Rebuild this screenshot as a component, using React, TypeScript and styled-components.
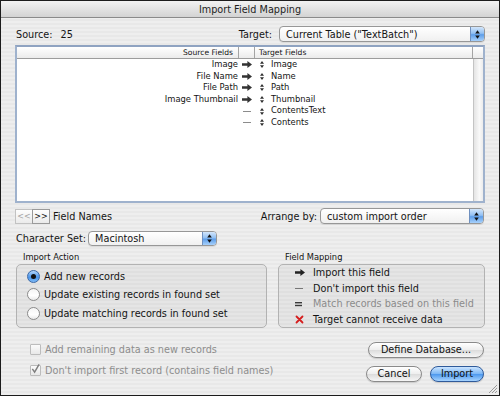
import React from "react";
import styled, { createGlobalStyle } from "styled-components";

const GlobalStyle = createGlobalStyle`
  html, body { margin: 0; padding: 0; background: #ffffff; }
  body { font-family: "DejaVu Sans", "Liberation Sans", sans-serif; }
`;

const Window = styled.div`
  position: relative;
  width: 500px;
  height: 396px;
  box-sizing: border-box;
  border: 1px solid #1c1c1c;
  background: repeating-linear-gradient(to bottom, #eeeeee 0, #eeeeee 2px, #e8e8e8 2px, #e8e8e8 4px);
  font-size: 9.7px;
  color: #141414;
  overflow: hidden;
  display: flex;
  flex-direction: column;
`;

const TitleBar = styled.div`
  height: 16px;
  border-bottom: 1px solid #8a8a8a;
  background: linear-gradient(#f2f2f2, #d3d3d3);
  display: flex;
  align-items: center;
  justify-content: center;
  color: #1e1e1e;
`;

const Body = styled.div`
  padding: 8px 14px 0 14px;
  display: flex;
  flex-direction: column;
`;

const Row = styled.div<{ $mt?: number; $h?: number }>`
  display: flex;
  align-items: center;
  height: ${(p) => p.$h ?? 16}px;
  margin-top: ${(p) => p.$mt ?? 0}px;
`;

const Label = styled.span<{ $ml?: number; $mr?: number }>`
  margin-left: ${(p) => p.$ml ?? 0}px;
  margin-right: ${(p) => p.$mr ?? 0}px;
  white-space: nowrap;
`;

const Spacer = styled.div`
  flex: 1;
`;

/* popup menus */
const PopupBox = styled.div<{ $w: number; $h?: number; $mr?: number }>`
  width: ${(p) => p.$w}px;
  height: ${(p) => p.$h ?? 16}px;
  margin-right: ${(p) => p.$mr ?? 0}px;
  box-sizing: border-box;
  display: flex;
  border: 1px solid #979797;
  border-radius: 4px;
  background: linear-gradient(#ffffff, #f0f0f0);
  overflow: hidden;
  box-shadow: 0 1px 0 rgba(0, 0, 0, 0.08);
`;

const PopupText = styled.span`
  flex: 1;
  padding-left: 6px;
  display: flex;
  align-items: center;
  white-space: nowrap;
`;

const PopupArrows = styled.span`
  width: 13px;
  border-left: 1px solid #6f90bf;
  background: linear-gradient(#d3e6fb, #92c0f2 45%, #5e9ee9 55%, #a8d1fb);
  display: flex;
  align-items: center;
  justify-content: center;
`;

const Popup = ({
  w,
  h,
  mr,
  children,
}: {
  w: number;
  h?: number;
  mr?: number;
  children: React.ReactNode;
}) => (
  <PopupBox $w={w} $h={h} $mr={mr}>
    <PopupText>{children}</PopupText>
    <PopupArrows>
      <svg width="5" height="9" viewBox="0 0 5 9">
        <path d="M2.5 0.3 L4.8 3.4 H0.2 Z M2.5 8.7 L4.8 5.6 H0.2 Z" fill="#111" />
      </svg>
    </PopupArrows>
  </PopupBox>
);

/* field list */
const ListBox = styled.div`
  margin-top: 3px;
  height: 158px;
  box-sizing: border-box;
  border: 2px solid #9fb2cd;
  border-top-color: #8fa3c1;
  background: #ffffff;
  display: flex;
  flex-direction: column;
`;

const HeaderGrid = styled.div`
  display: grid;
  grid-template-columns: 222px 16px 218px 10px;
  height: 11px;
  border-bottom: 1px solid #9c9c9c;
  background: linear-gradient(#ffffff, #ebebeb);
  font-size: 7.6px;
  line-height: 11px;
`;

const HeaderCell = styled.div<{ $align?: string; $last?: boolean }>`
  text-align: ${(p) => p.$align ?? "left"};
  padding: 0 5px 0 4px;
  border-right: ${(p) => (p.$last ? "none" : "1px solid #a4a4a4")};
  white-space: nowrap;
  overflow: hidden;
`;

const ListBody = styled.div`
  flex: 1;
  display: flex;
`;

const Rows = styled.div`
  flex: 1;
  display: flex;
  flex-direction: column;
`;

const Track = styled.div`
  width: 10px;
  box-sizing: border-box;
  border-left: 1px solid #c4c4c4;
  background: linear-gradient(to right, #e4e4e4, #f9f9f9 60%, #ececec);
`;

const FieldRow = styled.div`
  display: grid;
  grid-template-columns: 222px 16px 218px;
  height: 11.6px;
  align-items: center;
  font-size: 8.4px;
  line-height: 11.6px;
`;

const SourceCell = styled.div`
  text-align: right;
  padding-right: 1px;
  white-space: nowrap;
`;

const MidCell = styled.div`
  display: flex;
  align-items: center;
  justify-content: center;
`;

const TargetCell = styled.div`
  display: flex;
  align-items: center;
  padding-left: 5px;
  white-space: nowrap;
`;

const TargetText = styled.span`
  margin-left: 7px;
`;

const MapArrow = ({ color = "#333" }: { color?: string }) => (
  <svg width="10" height="7" viewBox="0 0 10 7">
    <path d="M0 2.2 H5.4 V0 L10 3.5 L5.4 7 V4.8 H0 Z" fill={color} />
  </svg>
);

const MapDash = ({ color = "#8c8c8c" }: { color?: string }) => (
  <svg width="8" height="3" viewBox="0 0 8 3">
    <rect x="0" y="1" width="8" height="1" fill={color} />
  </svg>
);

const MapEquals = () => (
  <svg width="7" height="6" viewBox="0 0 7 6">
    <rect x="0" y="1" width="7" height="1.4" fill="#3a3a3a" />
    <rect x="0" y="3.8" width="7" height="1.4" fill="#3a3a3a" />
  </svg>
);

const MapCross = () => (
  <svg width="9" height="9" viewBox="0 0 9 9">
    <path d="M1.5 1.5 L7.5 7.5 M7.5 1.5 L1.5 7.5" stroke="#d51e1e" strokeWidth="1.8" strokeLinecap="round" />
  </svg>
);

const UpDown = () => (
  <svg width="4" height="7" viewBox="0 0 4 7">
    <path d="M2 0 L4 2.8 H0 Z M2 7 L4 4.2 H0 Z" fill="#2e2e2e" />
  </svg>
);

type Mapping = { source: string; target: string; mapped: boolean };

const mappings: Mapping[] = [
  { source: "Image", target: "Image", mapped: true },
  { source: "File Name", target: "Name", mapped: true },
  { source: "File Path", target: "Path", mapped: true },
  { source: "Image Thumbnail", target: "Thumbnail", mapped: true },
  { source: "", target: "ContentsText", mapped: false },
  { source: "", target: "Contents", mapped: false },
];

/* nav row */
const NavButton = styled.button<{ $off?: boolean }>`
  width: 18px;
  height: 15px;
  padding: 0;
  margin: 0 -1px 0 0;
  box-sizing: border-box;
  border: 1px solid ${(p) => (p.$off ? "#c2c2c2" : "#9a9a9a")};
  background: linear-gradient(#fdfdfd, #ebebeb);
  font-family: inherit;
  font-size: 8px;
  line-height: 13px;
  color: ${(p) => (p.$off ? "#a4a4a4" : "#111")};
`;

/* groups */
const Groups = styled.div`
  display: flex;
  gap: 11px;
  margin-top: 6px;
`;

const Group = styled.div<{ $w: number; $ml?: number }>`
  width: ${(p) => p.$w}px;
  margin-left: ${(p) => p.$ml ?? 0}px;
  display: flex;
  flex-direction: column;
`;

const GroupTitle = styled.div`
  font-size: 8.3px;
  height: 10px;
  line-height: 10px;
  padding-left: 7px;
  margin-bottom: 2px;
`;

const GroupBox = styled.div<{ $pt?: number; $pl?: number }>`
  height: 64px;
  box-sizing: border-box;
  border: 1px solid #b2b2b2;
  border-radius: 5px;
  background: rgba(0, 0, 0, 0.035);
  padding: ${(p) => p.$pt ?? 0}px 0 0 ${(p) => p.$pl ?? 0}px;
  display: flex;
  flex-direction: column;
`;

const RadioRow = styled.div`
  display: flex;
  align-items: center;
  height: 18.5px;
`;

const RadioDot = styled.span<{ $on?: boolean }>`
  width: 13px;
  height: 13px;
  box-sizing: border-box;
  border-radius: 50%;
  border: 1px solid ${(p) => (p.$on ? "#3b68a6" : "#8b8b8b")};
  background: ${(p) =>
    p.$on
      ? "linear-gradient(#b3d6fb, #4b95ea 55%, #7cb9f6)"
      : "linear-gradient(#f4f4f4, #ffffff 60%, #e9e9e9)"};
  display: flex;
  align-items: center;
  justify-content: center;
  margin-right: 4px;
  &::after {
    content: "";
    display: ${(p) => (p.$on ? "block" : "none")};
    width: 5px;
    height: 5px;
    border-radius: 50%;
    background: #111;
  }
`;

const LegendRow = styled.div<{ $muted?: boolean }>`
  display: flex;
  align-items: center;
  height: 15.5px;
  color: ${(p) => (p.$muted ? "#8b8b8b" : "#141414")};
`;

const LegendIcon = styled.span`
  width: 18px;
  display: flex;
  align-items: center;
  padding-left: 1px;
`;

/* bottom */
const Bottom = styled.div`
  display: flex;
  justify-content: space-between;
  margin-top: 14px;
`;

const Checks = styled.div`
  display: flex;
  flex-direction: column;
  gap: 7px;
  padding-left: 15px;
`;

const CheckRow = styled.div`
  display: flex;
  align-items: center;
  height: 14px;
  color: #8d8d8d;
`;

const CheckBox = styled.span`
  width: 11px;
  height: 11px;
  box-sizing: border-box;
  border: 1px solid #bcbcbc;
  border-radius: 1px;
  background: linear-gradient(#fbfbfb, #e8e8e8);
  margin-right: 4px;
  display: flex;
  align-items: center;
  justify-content: center;
  overflow: visible;
`;

const Buttons = styled.div`
  display: flex;
  flex-direction: column;
  align-items: flex-end;
  gap: 8px;
  margin-right: 1px;
`;

const ButtonLine = styled.div`
  display: flex;
  gap: 8px;
`;

const AquaButton = styled.button<{ $w: number; $primary?: boolean }>`
  width: ${(p) => p.$w}px;
  height: 16px;
  padding: 0;
  box-sizing: border-box;
  border-radius: 8px;
  border: 1px solid ${(p) => (p.$primary ? "#2f5a9a" : "#8a8a8a")};
  background: ${(p) =>
    p.$primary
      ? "linear-gradient(#cbe4ff, #7db8f6 48%, #4d98ee 52%, #a7d4ff)"
      : "linear-gradient(#ffffff, #eeeeee 48%, #dcdcdc 52%, #f6f6f6)"};
  font-family: inherit;
  font-size: 9.7px;
  line-height: 14px;
  color: #111;
  box-shadow: 0 1px 1px rgba(0, 0, 0, 0.15);
`;

const Grip = styled.svg`
  position: absolute;
  right: 1px;
  bottom: 1px;
`;

export default function App() {
  return (
    <>
      <GlobalStyle />
      <Window>
        <TitleBar>Import Field Mapping</TitleBar>
        <Body>
          <Row>
            <Label $ml={1}>Source:</Label>
            <Label $ml={8}>25</Label>
            <Spacer />
            <Label $mr={7}>Target:</Label>
            <Popup w={206}>Current Table ("TextBatch")</Popup>
          </Row>

          <ListBox>
            <HeaderGrid>
              <HeaderCell $align="right">Source Fields</HeaderCell>
              <HeaderCell />
              <HeaderCell>Target Fields</HeaderCell>
              <HeaderCell $last />
            </HeaderGrid>
            <ListBody>
              <Rows>
                {mappings.map((m) => (
                  <FieldRow key={m.target}>
                    <SourceCell>{m.source}</SourceCell>
                    <MidCell>{m.mapped ? <MapArrow /> : <MapDash />}</MidCell>
                    <TargetCell>
                      <UpDown />
                      <TargetText>{m.target}</TargetText>
                    </TargetCell>
                  </FieldRow>
                ))}
              </Rows>
              <Track />
            </ListBody>
          </ListBox>

          <Row $mt={5}>
            <NavButton $off>&lt;&lt;</NavButton>
            <NavButton>&gt;&gt;</NavButton>
            <Label $ml={4}>Field Names</Label>
            <Spacer />
            <Label $mr={3}>Arrange by:</Label>
            <Popup w={164} mr={1}>
              custom import order
            </Popup>
          </Row>

          <Row $mt={7} $h={15}>
            <Label $ml={1} $mr={2}>Character Set:</Label>
            <Popup w={129} h={15}>
              Macintosh
            </Popup>
          </Row>

          <Groups>
            <Group $w={251} $ml={1}>
              <GroupTitle>Import Action</GroupTitle>
              <GroupBox $pt={2} $pl={10}>
                <RadioRow>
                  <RadioDot $on />
                  Add new records
                </RadioRow>
                <RadioRow>
                  <RadioDot />
                  Update existing records in found set
                </RadioRow>
                <RadioRow>
                  <RadioDot />
                  Update matching records in found set
                </RadioRow>
              </GroupBox>
            </Group>
            <Group $w={207}>
              <GroupTitle>Field Mapping</GroupTitle>
              <GroupBox $pl={15}>
                <LegendRow>
                  <LegendIcon>
                    <MapArrow color="#222" />
                  </LegendIcon>
                  Import this field
                </LegendRow>
                <LegendRow>
                  <LegendIcon>
                    <MapDash color="#777" />
                  </LegendIcon>
                  Don't import this field
                </LegendRow>
                <LegendRow $muted>
                  <LegendIcon>
                    <MapEquals />
                  </LegendIcon>
                  Match records based on this field
                </LegendRow>
                <LegendRow>
                  <LegendIcon>
                    <MapCross />
                  </LegendIcon>
                  Target cannot receive data
                </LegendRow>
              </GroupBox>
            </Group>
          </Groups>

          <Bottom>
            <Checks>
              <CheckRow>
                <CheckBox />
                Add remaining data as new records
              </CheckRow>
              <CheckRow>
                <CheckBox>
                  <svg width="10" height="11" viewBox="0 0 10 11" style={{ marginTop: -3 }}>
                    <path d="M1.5 6 L4 9.5 L9 0.8" stroke="#7e7e7e" strokeWidth="1.6" fill="none" />
                  </svg>
                </CheckBox>
                Don't import first record (contains field names)
              </CheckRow>
            </Checks>
            <Buttons>
              <AquaButton $w={116}>Define Database...</AquaButton>
              <ButtonLine>
                <AquaButton $w={56}>Cancel</AquaButton>
                <AquaButton $w={54} $primary>
                  Import
                </AquaButton>
              </ButtonLine>
            </Buttons>
          </Bottom>
        </Body>
        <Grip width="11" height="11" viewBox="0 0 11 11">
          <path d="M10 2 L2 10 M10 5 L5 10 M10 8 L8 10" stroke="#9a9a9a" strokeWidth="1" />
        </Grip>
      </Window>
    </>
  );
}
